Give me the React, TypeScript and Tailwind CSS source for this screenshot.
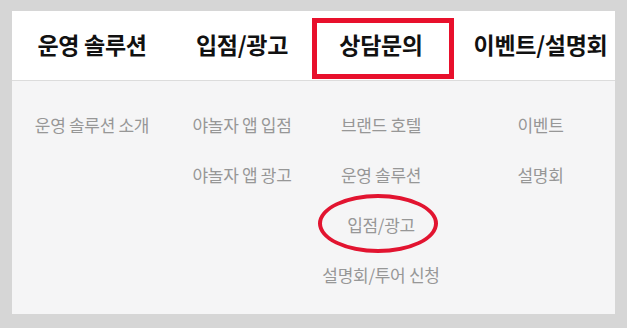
import React from 'react';

const font = { fontFamily: '"Noto Sans CJK KR", "Noto Sans", sans-serif' };

const columns = [
  { title: '운영 솔루션', width: 'w-[160px]', items: ['운영 솔루션 소개'] },
  { title: '입점/광고', width: 'w-[140px]', items: ['야놀자 앱 입점', '야놀자 앱 광고'] },
  { title: '상담문의', width: 'w-[138px]', items: ['브랜드 호텔', '운영 솔루션', '입점/광고', '설명회/투어 신청'] },
  { title: '이벤트/설명회', width: 'w-[165px] pl-[16px]', items: ['이벤트', '설명회'] },
];

export default function App() {
  return (
    <div className="w-[627px] h-[328px] bg-[#d6d6d6] pt-[11px] pl-[12px] pr-[12px] pb-[14px]" style={font}>
      <div className="h-full flex flex-col">
        {/* 상단 메뉴 */}
        <div className="h-[69px] bg-white flex border-b border-[#dcdcdc] box-content">
          {columns.map((c, i) => (
            <div key={c.title} className={`${c.width} relative flex items-center justify-center`}>
              <span className="text-[23px] font-bold text-[#111] tracking-[-0.3px] leading-none whitespace-nowrap mt-[-2px]">{c.title}</span>
              {i === 2 && (
                <div className="absolute left-0 top-[7px] w-[142px] h-[61px] border-[5px] border-[#e8102c]" />
              )}
            </div>
          ))}
        </div>
        {/* 하위 메뉴 */}
        <div className="flex-1 bg-[#f5f5f6] flex pt-[18px]">
          {columns.map((c, i) => (
            <div key={c.title} className={`${c.width} flex flex-col`}>
              {c.items.map((it) => (
                <div key={it} className="h-[50px] relative flex items-center justify-center">
                  <span className="text-[17px] text-[#979797] tracking-[-0.3px] leading-none whitespace-nowrap">{it}</span>
                  {i === 2 && it === '입점/광고' && (
                    <div className="absolute left-[6px] top-[-5px] w-[120px] h-[59px] rounded-[50%] border-[4px] border-[#e21430]" />
                  )}
                </div>
              ))}
            </div>
          ))}
        </div>
      </div>
    </div>
  );
}
